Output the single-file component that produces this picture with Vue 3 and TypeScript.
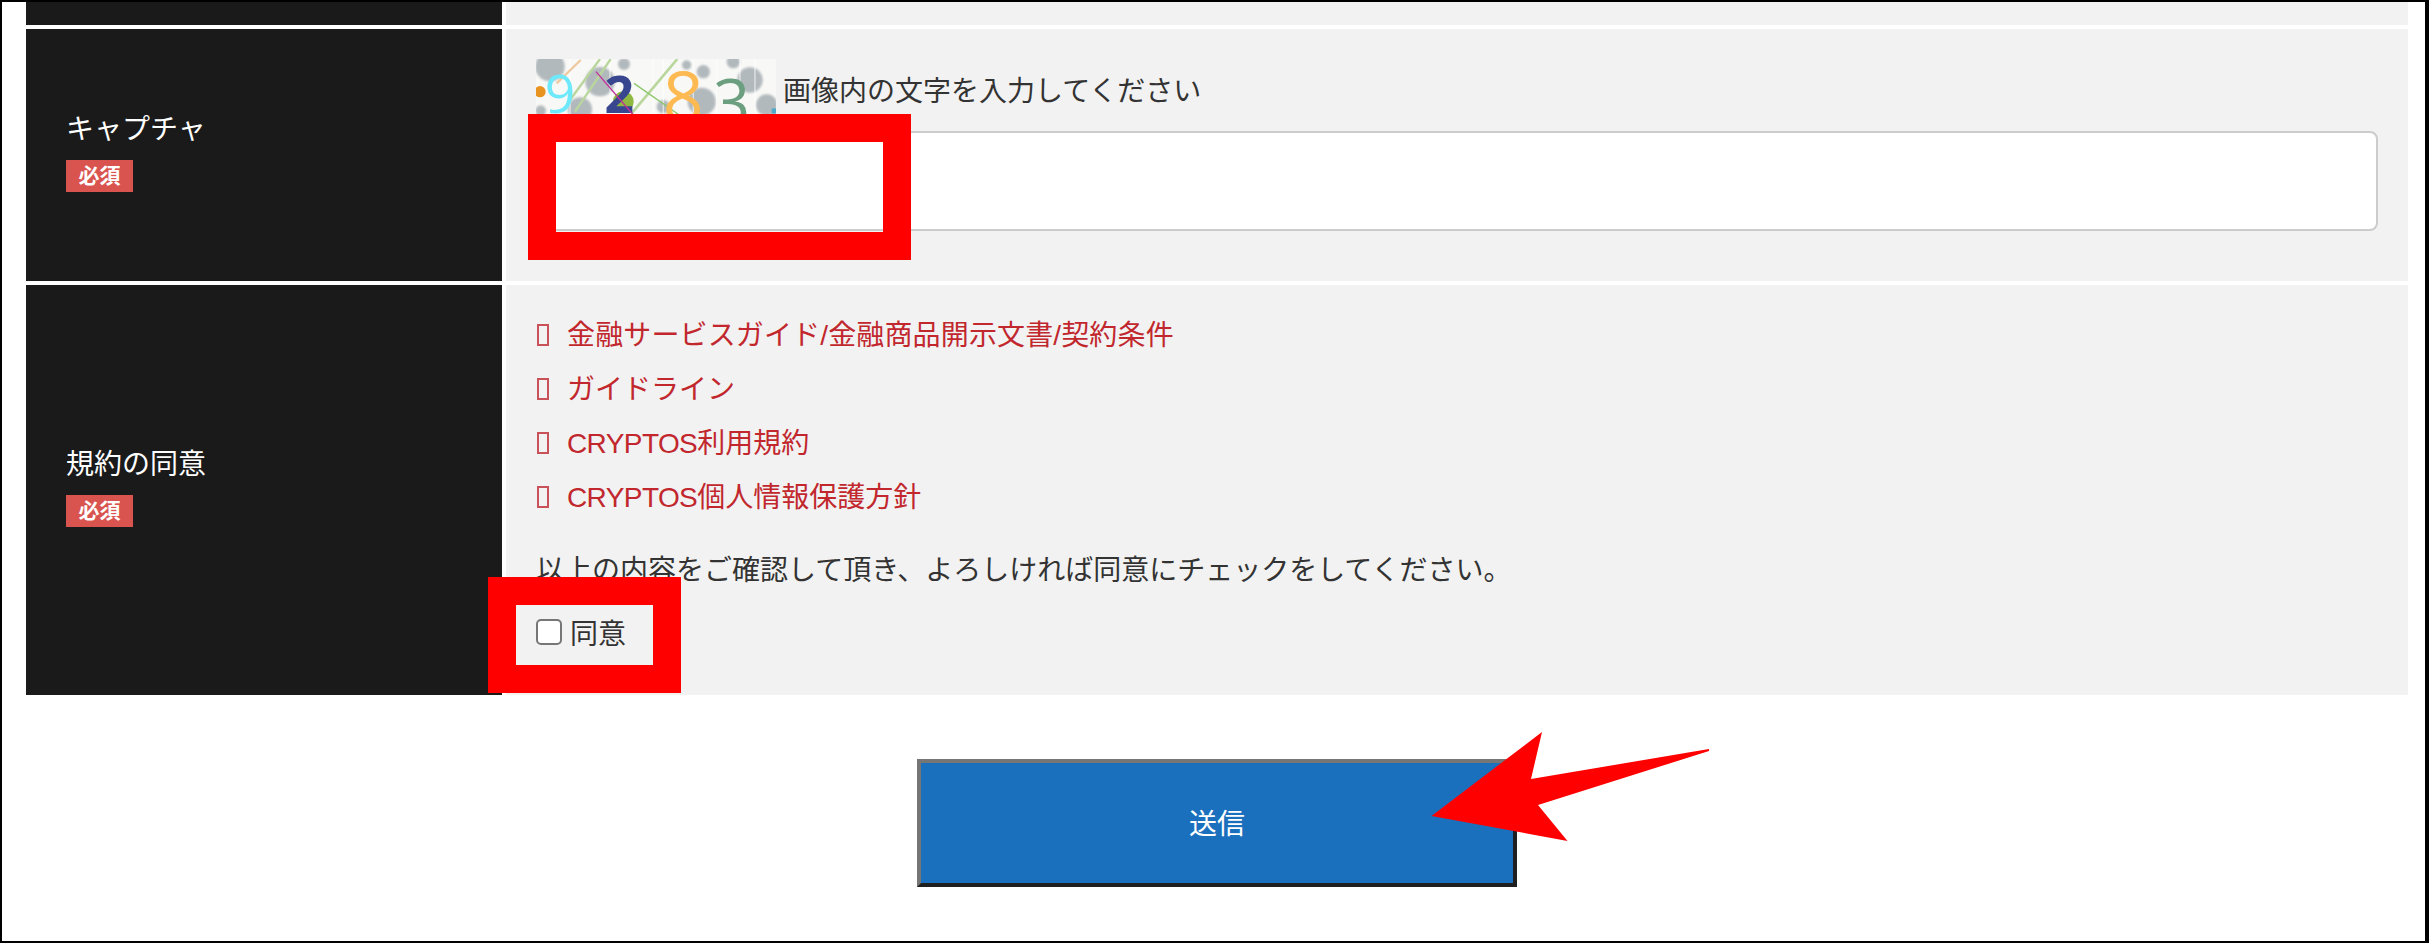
<script setup lang="ts">
interface TermLink {
  latin: string
  text: string
}

const links: TermLink[] = [
  { latin: '', text: '金融サービスガイド/金融商品開示文書/契約条件' },
  { latin: '', text: 'ガイドライン' },
  { latin: 'CRYPTOS', text: '利用規約' },
  { latin: 'CRYPTOS', text: '個人情報保護方針' },
]
</script>

<template>
  <main class="frame">
    <div class="form">
      <div class="row row-top">
        <div class="th"></div>
        <div class="td"></div>
      </div>

      <div class="row">
        <div class="th">
          <span class="label">キャプチャ</span>
          <span class="badge">必須</span>
        </div>
        <div class="td td-captcha">
          <div class="captcha-line">
            <svg class="captcha" viewBox="48 27 720 252" aria-label="captcha">
              <defs>
                <filter id="soft" x="-5%" y="-5%" width="110%" height="110%">
                  <feGaussianBlur stdDeviation="2.5" />
                </filter>
              </defs>
              <rect x="48" y="27" width="720" height="252" fill="#f8f8f6" />
              <g fill="#b2b9bd" filter="url(#soft)">
                <circle cx="90" cy="50" r="44" />
                <circle cx="240" cy="95" r="44" />
                <circle cx="690" cy="90" r="38" />
                <circle cx="740" cy="165" r="32" />
                <circle cx="545" cy="155" r="42" />
                <circle cx="550" cy="65" r="20" />
                <circle cx="312" cy="42" r="18" />
                <circle cx="180" cy="178" r="36" />
                <circle cx="62" cy="182" r="16" />
                <circle cx="640" cy="35" r="20" />
                <circle cx="500" cy="45" r="14" />
                <circle cx="430" cy="170" r="20" />
              </g>
              <g stroke="#ffffff" stroke-width="4" opacity="0.6">
                <path d="M400 27V279M430 27V279M520 27V279M590 27V279M660 27V279M705 27V279M150 27V279M270 27V279" />
              </g>
              <circle cx="60" cy="125" r="17" fill="#e8931f" />
              <circle cx="310" cy="155" r="31" fill="#8eb83f" />
              <path d="M182 30L110 100" stroke="#efc9a0" stroke-width="7" />
              <path d="M272 27L165 185M240 27L150 150" stroke="#b9d79d" stroke-width="7" fill="none" />
              <path d="M472 27L335 190" stroke="#b9d79d" stroke-width="8" />
              <text class="dg dg-9" x="120" y="190">9</text>
              <text class="dg dg-2" x="298" y="188">2</text>
              <path d="M228 65L340 195" stroke="#c2309a" stroke-width="4" />
              <path d="M342 100L478 195" stroke="#8cc76a" stroke-width="4" />
              <text class="dg dg-8" x="490" y="218">8</text>
              <text class="dg dg-3" x="635" y="229">3</text>
              <rect x="755" y="175" width="13" height="16" fill="#4fa9c9" />
            </svg>
            <span class="captcha-text">画像内の文字を入力してください</span>
          </div>
          <input class="captcha-input" type="text" aria-label="キャプチャ" />
          <div class="mark mark-captcha"></div>
        </div>
      </div>

      <div class="row">
        <div class="th">
          <span class="label">規約の同意</span>
          <span class="badge">必須</span>
        </div>
        <div class="td td-terms">
          <ul class="links">
            <li v-for="link in links" :key="link.latin + link.text" class="link">
              <span class="tofu"></span>
              <a href="#"><span class="latin">{{ link.latin }}</span>{{ link.text }}</a>
            </li>
          </ul>
          <p class="notice">以上の内容をご確認して頂き、よろしければ同意にチェックをしてください。</p>
          <label class="agree">
            <input class="check" type="checkbox" />
            <span>同意</span>
          </label>
          <div class="mark mark-agree"></div>
        </div>
      </div>
    </div>

    <div class="actions">
      <div class="submit-wrap">
        <button class="submit" type="button">送信</button>
        <svg class="arrow" viewBox="0 0 278 109" width="278" height="109" aria-hidden="true">
          <polygon points="0.5,84 111,0 100,47 278,17 278,19 107,73 136.5,109" fill="#ff0000" />
        </svg>
      </div>
    </div>
  </main>
</template>

<style scoped>
.frame {
  box-sizing: border-box;
  height: 943px;
  border-style: solid;
  border-color: #000;
  border-width: 2px 4px 2px 2px;
  padding: 0 17px 0 24px;
  background: #fff;
  overflow: hidden;
  font-family: "Liberation Sans", "Noto Sans CJK JP", sans-serif;
  font-size: 28px;
  line-height: 42px;
  color: #333;
}

.form {
  display: flex;
  flex-direction: column;
  gap: 4px;
}

.row {
  display: grid;
  grid-template-columns: 476px 1fr;
  column-gap: 4px;
}

.row-top {
  height: 23px;
}

.th {
  background: #1a1a1a;
  color: #fff;
  padding-left: 40px;
  display: flex;
  flex-direction: column;
  justify-content: center;
  align-items: flex-start;
}

.label {
  line-height: 23px;
  margin-bottom: 19px;
}

.badge {
  width: 67px;
  height: 32px;
  background: #d9534f;
  color: #fff;
  font-size: 21px;
  font-weight: 700;
  line-height: 32px;
  text-align: center;
}

.td {
  background: #f2f2f2;
  position: relative;
}

.td-captcha {
  padding: 30px 30px 50px 30px;
}

.captcha-line {
  display: flex;
  align-items: flex-start;
  gap: 7px;
  height: 72px;
}

.captcha {
  display: block;
  width: 240px;
  height: 84px;
  flex: none;
}

.dg {
  font-family: "Open Sans", sans-serif;
  text-anchor: middle;
}

.dg-9 { fill: #6ee9fb; font-weight: 400; font-size: 160px; }
.dg-2 { fill: #38468f; font-weight: 700; font-size: 155px; }
.dg-8 { fill: #fdba52; font-weight: 400; font-size: 215px; }
.dg-3 { fill: #6b9f7f; font-weight: 400; font-size: 195px; }

.captcha-text {
  margin-top: 12px;
}

.captcha-input {
  position: relative;
  display: block;
  box-sizing: border-box;
  width: 100%;
  height: 100px;
  border: 2px solid #ccc;
  border-radius: 8px;
  background: #fff;
  padding: 0 16px;
  margin: 0;
  outline: none;
}

.mark {
  position: absolute;
  box-sizing: border-box;
  border: 28px solid #ff0000;
  pointer-events: none;
}

.mark-captcha {
  left: 22px;
  top: 85px;
  width: 383px;
  height: 146px;
}

.mark-agree {
  left: -18px;
  top: 292px;
  width: 193px;
  height: 116px;
}

.td-terms {
  padding: 24px 30px 39px 30px;
}

.links {
  list-style: none;
  margin: 0;
  padding: 0;
}

.link {
  display: flex;
  align-items: center;
  height: 54px;
  color: #c1272d;
}

.link a {
  color: inherit;
  text-decoration: none;
}

.link:first-child a {
  letter-spacing: 0.14px;
}

.latin {
  letter-spacing: -0.6px;
}

.tofu {
  box-sizing: border-box;
  flex: none;
  width: 12px;
  height: 22px;
  border: 2px solid #c9525a;
  margin: 0 18px 3px 1px;
}

.notice {
  margin: 25px 0 0;
}

.agree {
  display: flex;
  align-items: center;
  gap: 8px;
  margin-top: 22px;
  height: 42px;
}

.check {
  appearance: none;
  box-sizing: border-box;
  width: 26px;
  height: 26px;
  margin: 0;
  background: #fff;
  border: 2px solid #767676;
  border-radius: 5px;
  position: relative;
  top: -3px;
}

.actions {
  display: flex;
  justify-content: center;
  margin-top: 64px;
}

.submit-wrap {
  position: relative;
}

.submit {
  display: block;
  box-sizing: border-box;
  width: 600px;
  height: 128px;
  border-width: 4px;
  border-style: solid;
  border-color: #767676 #1f1f1f #1f1f1f #767676;
  background: #1b70bd;
  color: #fff;
  font-family: inherit;
  font-size: 28px;
  padding: 0 0 2px;
}

.arrow {
  position: absolute;
  left: 514px;
  top: -27px;
  display: block;
}
</style>

<style>
html,
body {
  margin: 0;
  background: #fff;
}
</style>
